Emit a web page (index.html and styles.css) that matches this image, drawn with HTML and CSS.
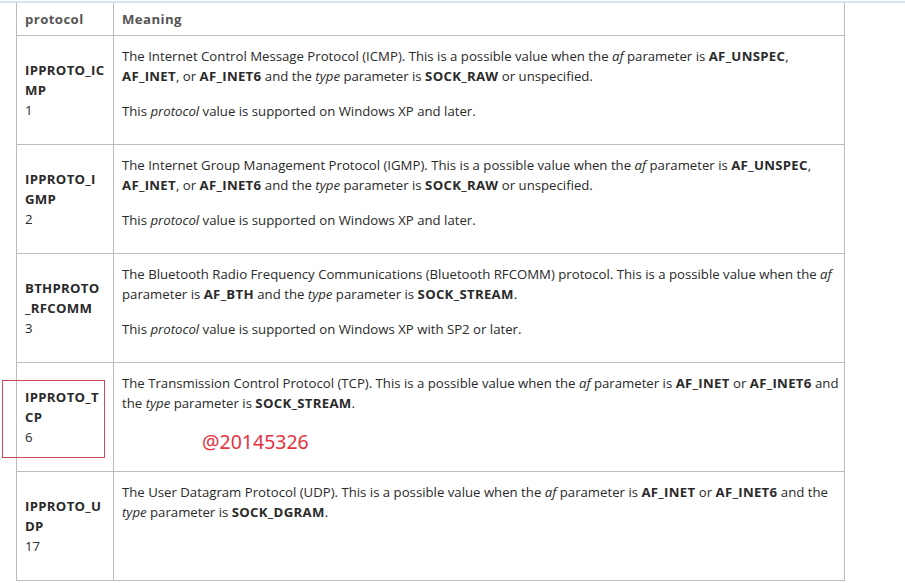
FILE: index.html
```html
<!DOCTYPE html>
<html>
<head>
<meta charset="utf-8">
<link rel="stylesheet" href="styles.css">
</head>
<body>
<div class="topline"></div>
<table class="proto">
  <thead>
    <tr><th class="c1">protocol</th><th>Meaning</th></tr>
  </thead>
  <tbody>
    <tr>
      <td class="c1"><b>IPPROTO_IC<br>MP</b><br>1</td>
      <td class="c2"><p>The Internet Control Message Protocol (ICMP). This is a possible value when the <i>af</i> parameter is <b>AF_UNSPEC</b>,<br><b>AF_INET</b>, or <b>AF_INET6</b> and the <i>type</i> parameter is <b>SOCK_RAW</b> or unspecified.</p><p>This <i>protocol</i> value is supported on Windows XP and later.</p></td>
    </tr>
    <tr>
      <td class="c1"><b>IPPROTO_I<br>GMP</b><br>2</td>
      <td class="c2"><p>The Internet Group Management Protocol (IGMP). This is a possible value when the <i>af</i> parameter is <b>AF_UNSPEC</b>,<br><b>AF_INET</b>, or <b>AF_INET6</b> and the <i>type</i> parameter is <b>SOCK_RAW</b> or unspecified.</p><p>This <i>protocol</i> value is supported on Windows XP and later.</p></td>
    </tr>
    <tr>
      <td class="c1"><b>BTHPROTO<br>_RFCOMM</b><br>3</td>
      <td class="c2"><p>The Bluetooth Radio Frequency Communications (Bluetooth RFCOMM) protocol. This is a possible value when the <i>af</i><br>parameter is <b>AF_BTH</b> and the <i>type</i> parameter is <b>SOCK_STREAM</b>.</p><p>This <i>protocol</i> value is supported on Windows XP with SP2 or later.</p></td>
    </tr>
    <tr>
      <td class="c1"><b>IPPROTO_T<br>CP</b><br>6</td>
      <td class="c2"><p>The Transmission Control Protocol (TCP). This is a possible value when the <i>af</i> parameter is <b>AF_INET</b> or <b>AF_INET6</b> and<br>the <i>type</i> parameter is <b>SOCK_STREAM</b>.</p></td>
    </tr>
    <tr>
      <td class="c1"><b>IPPROTO_U<br>DP</b><br>17</td>
      <td class="c2"><p>The User Datagram Protocol (UDP). This is a possible value when the <i>af</i> parameter is <b>AF_INET</b> or <b>AF_INET6</b> and the<br><i>type</i> parameter is <b>SOCK_DGRAM</b>.</p></td>
    </tr>
  </tbody>
</table>
<div class="mark-box"></div>
<div class="mark-text">@20145326</div>
</body>
</html>
```
FILE: styles.css
```css
html, body {
  margin: 0;
  padding: 0;
  background: #fff;
}
body {
  font-family: "Open Sans", "Noto Sans", sans-serif;
  font-size: 13.2px;
  color: #2a2a2a;
  position: relative;
  height: 583px;
  overflow: hidden;
}
b {
  letter-spacing: 0.3px;
}
.topline {
  margin-top: 1px;
  height: 2px;
  background: #d7e3f3;
}
.proto {
  border-collapse: collapse;
  margin-left: 16px;
  width: 829px;
  table-layout: fixed;
}
.proto th, .proto td {
  border-left: 1px solid #bdbdbd;
  border-right: 1px solid #bdbdbd;
  border-bottom: 1px solid #bdbdbd;
  line-height: 20px;
  text-align: left;
}
.proto th {
  padding: 6px 8px;
  color: #555;
  font-weight: bold;
  letter-spacing: 0.4px;
}
.proto .c1 {
  width: 80px;
}
.proto td.c1 {
  padding: 24px 8px;
  vertical-align: middle;
  white-space: nowrap;
}
.proto td.c2 {
  padding: 10px 8px;
  vertical-align: top;
  white-space: nowrap;
}
.proto p {
  margin: 0 0 15px;
}
.proto p:last-child {
  margin-bottom: 0;
}
.mark-box {
  position: absolute;
  left: 2px;
  top: 380px;
  width: 101px;
  height: 76px;
  border: 1px solid #c9485a;
}
.mark-text {
  position: absolute;
  left: 202px;
  top: 428px;
  font-family: "Noto Sans", sans-serif;
  font-size: 19.5px;
  line-height: 28px;
  color: #e5323f;
}
```
